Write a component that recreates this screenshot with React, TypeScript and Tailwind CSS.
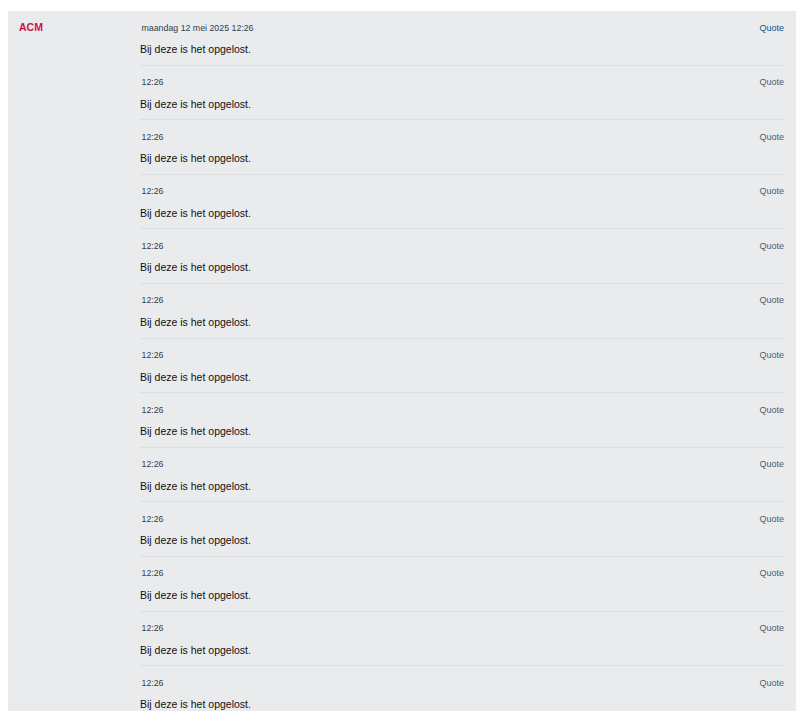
import React from "react";

const rows = Array.from({ length: 13 }, (_, i) => i);

export default function App() {
  return (
    <div
      className="h-[711px] overflow-hidden bg-white pt-[11px]"
      style={{ fontFamily: '"Liberation Sans", Arial, sans-serif' }}
    >
      <div className="ml-[8px] mr-[4px] flex bg-[#eaebed]">
        <div className="w-[132px] shrink-0 pl-[11px] pt-[10px]">
          <div className="text-[10.5px] font-bold leading-[12px] text-[#cc1144]">ACM</div>
        </div>
        <div className="flex-1 pr-[12px]">
          {rows.map((i) => (
            <div
              key={i}
              className="box-border h-[54.6px] border-b border-[#dcdee1] pt-[10.5px]"
            >
              <div className="flex h-[12px] items-center justify-between leading-[12px]">
                <span className="pl-[1.5px] text-[8.8px] text-[#333d4a]">
                  {i === 0 ? "maandag 12 mei 2025 12:26" : "12:26"}
                </span>
                <span
                  className={
                    i === 0
                      ? "text-[9px] text-[#105289]"
                      : "text-[9px] text-[#4e5c6e]"
                  }
                >
                  Quote
                </span>
              </div>
              <div className="mt-[8.5px] text-[10.5px] leading-[14px] text-[#111111]">
                Bij deze is het opgelost.
              </div>
            </div>
          ))}
        </div>
      </div>
    </div>
  );
}
